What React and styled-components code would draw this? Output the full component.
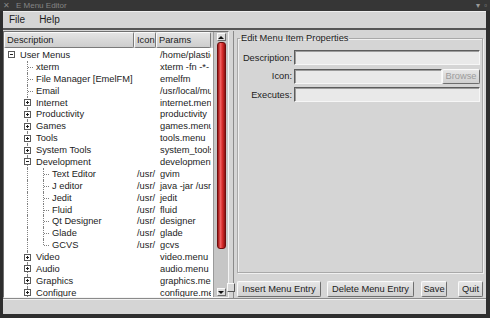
import React from 'react';
import styled, { createGlobalStyle } from 'styled-components';

const GlobalStyle = createGlobalStyle`
  html, body {
    margin: 0;
    padding: 0;
    background: #2e2e2e;
  }
  body {
    font-family: "Liberation Sans", Arial, sans-serif;
    font-size: 9.3px;
    color: #1c1c1c;
  }
  * { box-sizing: border-box; }
`;

const Window = styled.div`
  width: 490px;
  height: 318px;
  display: flex;
  flex-direction: column;
  background: #2e2e2e;
  overflow: hidden;
`;

const TitleBar = styled.div`
  height: 11px;
  display: flex;
  align-items: center;
  padding: 0 3px 0 3px;
  background: #363636;
  color: #858585;
  font-size: 8px;
  line-height: 11px;
`;

const TitleText = styled.span`
  margin-left: 6px;
  flex: 1;
`;

const TitleIcon = styled.span`
  margin-left: 4px;
  color: #9a9a9a;
`;

const Client = styled.div`
  flex: 1;
  min-height: 0;
  margin: 0 4px 4px 3px;
  background: #d5d5d5;
  display: flex;
  flex-direction: column;
`;

const MenuBar = styled.div`
  height: 19px;
  display: flex;
  align-items: center;
  gap: 14px;
  padding-left: 6px;
  border-bottom: 2px solid #555;
  box-shadow: inset 0 1px 0 #eeeeee;
  font-size: 10px;
`;

const Paned = styled.div`
  flex: 1;
  min-height: 0;
  display: flex;
  position: relative;
  padding-top: 1px;
`;

const LeftPane = styled.div`
  width: 226px;
  display: flex;
  border: 1px solid;
  border-color: #707070 #f4f4f4 #f4f4f4 #707070;
`;

const TreeView = styled.div`
  width: 209px;
  display: flex;
  flex-direction: column;
`;

const Header = styled.div`
  height: 16px;
  display: flex;
  background: #d5d5d5;
`;

const HeadButton = styled.div`
  width: ${p => p.$w}px;
  height: 16px;
  flex: none;
  padding-left: 2px;
  line-height: 14px;
  border: 1px solid;
  border-color: #fafafa #7a7a7a #7a7a7a #fafafa;
  border-radius: 2px;
  background: linear-gradient(#e4e4e4, #cdcdcd);
  white-space: nowrap;
  overflow: hidden;
`;

const Rows = styled.div`
  flex: 1;
  background: #ffffff;
  padding-top: 1px;
  overflow: hidden;
`;

const Row = styled.div`
  height: 11.9px;
  display: flex;
  align-items: stretch;
  white-space: nowrap;
`;

const DescCell = styled.div`
  width: 130px;
  flex: none;
  display: flex;
  align-items: stretch;
  overflow: hidden;
`;

const Label = styled.span`
  align-self: center;
`;

const IconCell = styled.div`
  width: 22px;
  flex: none;
  padding-left: 3px;
  overflow: hidden;
  align-self: center;
`;

const ParamsCell = styled.div`
  width: 55px;
  flex: none;
  padding-left: 4px;
  overflow: hidden;
  align-self: center;
`;

const Guide = styled.span`
  width: 16px;
  flex: none;
  position: relative;
  display: flex;
  align-items: center;
  padding-left: 4px;

  &::before {
    content: '';
    display: ${p => (p.$v === 'none' ? 'none' : 'block')};
    position: absolute;
    left: 7px;
    top: 0;
    bottom: ${p => (p.$v === 'top' ? '50%' : '0')};
    border-left: 1px dotted #808080;
  }

  &::after {
    content: '';
    display: ${p => (p.$stub ? 'block' : 'none')};
    position: absolute;
    left: 8px;
    top: 50%;
    width: 5px;
    border-top: 1px dotted #808080;
  }
`;

const Expander = styled.span`
  width: 7px;
  height: 7px;
  position: relative;
  z-index: 1;
  background: #fff;
  border: 1px solid #5a5a5a;

  &::before {
    content: '';
    position: absolute;
    left: 1px;
    right: 1px;
    top: 2px;
    border-top: 1px solid #202020;
  }

  &::after {
    content: '';
    display: ${p => (p.$open ? 'none' : 'block')};
    position: absolute;
    top: 1px;
    bottom: 1px;
    left: 2px;
    border-left: 1px solid #202020;
  }
`;

const Scrollbar = styled.div`
  width: 15px;
  display: flex;
  flex-direction: column;
  align-items: center;
  padding: 1px 0;
  background: #c6c6c6;
  border-left: 1px solid #9a9a9a;
`;

const Arrow = styled.div`
  width: 9px;
  height: 8px;
  flex: none;
  display: flex;
  align-items: center;
  justify-content: center;
  background: #dedede;
  border: 1px solid;
  border-color: #fafafa #6a6a6a #6a6a6a #fafafa;

  &::after {
    content: '';
    border-left: 3px solid transparent;
    border-right: 3px solid transparent;
    ${p => (p.$down ? 'border-top: 3px solid #111;' : 'border-bottom: 3px solid #111;')}
  }
`;

const Track = styled.div`
  flex: 1;
  width: 100%;
  display: flex;
  justify-content: center;
  padding-top: 1px;
`;

const Thumb = styled.div`
  width: 9px;
  height: ${p => p.$h}px;
  border: 1px solid #6e0c0c;
  border-radius: 3px;
  background: linear-gradient(90deg, #9c1616, #f06060 35%, #d42a2a 65%, #8c1212);
`;

const Handle = styled.div`
  position: absolute;
  left: 224px;
  bottom: 6px;
  width: 8px;
  height: 9px;
  background: #d8d8d8;
  border: 1px solid;
  border-color: #fafafa #555 #555 #fafafa;
`;

const RightPane = styled.div`
  flex: 1;
  margin-left: 4px;
  display: flex;
  flex-direction: column;
  padding: 2px 3px 1px 3px;
  border-left: 1px solid #8a8a8a;
`;

const Frame = styled.fieldset`
  flex: 1;
  margin: 0;
  padding: 6px 2px 0 1px;
  border: 1px solid #a9a9a9;
  box-shadow: inset 1px 1px 0 #f0f0f0, 1px 1px 0 #f0f0f0;
  min-width: 0;
`;

const Legend = styled.legend`
  padding: 0 1px;
  margin-left: 1px;
  font-size: 9.3px;
  line-height: 11px;
`;

const Fields = styled.div`
  display: grid;
  grid-template-columns: 53px 1fr;
  column-gap: 2px;
  row-gap: 3.5px;
  align-items: center;
`;

const FieldLabel = styled.span`
  text-align: right;
  white-space: nowrap;
`;

const FieldLine = styled.div`
  display: flex;
  height: 15px;
`;

const TextInput = styled.div`
  flex: 1;
  height: 15px;
  background: #e9e9e9;
  border: 1px solid;
  border-color: #5c5c5c #f6f6f6 #f6f6f6 #5c5c5c;
  box-shadow: inset 1px 1px 0 #9c9c9c;
`;

const Button = styled.div`
  width: ${p => p.$w}px;
  height: ${p => p.$h || 16}px;
  margin-left: ${p => p.$ml || 0}px;
  flex: none;
  display: flex;
  align-items: center;
  justify-content: center;
  white-space: nowrap;
  color: ${p => (p.$disabled ? '#9c9c9c' : '#1c1c1c')};
  background: linear-gradient(#e6e6e6, #d0d0d0);
  border: 1px solid;
  border-color: #fafafa #6e6e6e #6e6e6e #fafafa;
  border-radius: 2px;
`;

const ButtonRow = styled.div`
  height: 16px;
  margin-top: 8px;
  display: flex;
`;

const StatusBar = styled.div`
  height: 16px;
  flex: none;
  border-top: 1px solid #8a8a8a;
  box-shadow: inset 0 1px 0 #f2f2f2;
`;

const rows = [
  { lvl: 0, exp: 'open', desc: 'User Menus', params: '/home/plastic' },
  { lvl: 1, desc: 'xterm', params: 'xterm -fn -*-' },
  { lvl: 1, desc: 'File Manager [EmelFM]', params: 'emelfm' },
  { lvl: 1, desc: 'Email', params: '/usr/local/mutt' },
  { lvl: 1, exp: 'closed', desc: 'Internet', params: 'internet.menu' },
  { lvl: 1, exp: 'closed', desc: 'Productivity', params: 'productivity' },
  { lvl: 1, exp: 'closed', desc: 'Games', params: 'games.menu' },
  { lvl: 1, exp: 'closed', desc: 'Tools', params: 'tools.menu' },
  { lvl: 1, exp: 'closed', desc: 'System Tools', params: 'system_tools' },
  { lvl: 1, exp: 'open', desc: 'Development', params: 'development' },
  { lvl: 2, desc: 'Text Editor', icon: '/usr/', params: 'gvim' },
  { lvl: 2, desc: 'J editor', icon: '/usr/', params: 'java -jar /usr' },
  { lvl: 2, desc: 'Jedit', icon: '/usr/', params: 'jedit' },
  { lvl: 2, desc: 'Fluid', icon: '/usr/', params: 'fluid' },
  { lvl: 2, desc: 'Qt Designer', icon: '/usr/', params: 'designer' },
  { lvl: 2, desc: 'Glade', icon: '/usr/', params: 'glade' },
  { lvl: 2, desc: 'GCVS', icon: '/usr/', params: 'gcvs', last: true },
  { lvl: 1, exp: 'closed', desc: 'Video', params: 'video.menu' },
  { lvl: 1, exp: 'closed', desc: 'Audio', params: 'audio.menu' },
  { lvl: 1, exp: 'closed', desc: 'Graphics', params: 'graphics.menu' },
  { lvl: 1, exp: 'closed', desc: 'Configure', params: 'configure.menu' },
];

const TreeGuides = ({ row }) => {
  const box = row.exp ? <Expander $open={row.exp === 'open'} /> : null;
  if (row.lvl === 0) {
    return <Guide $v="none">{box}</Guide>;
  }
  if (row.lvl === 1) {
    return (
      <>
        <Guide $v="none" />
        <Guide $v="full" $stub={!row.exp}>{box}</Guide>
      </>
    );
  }
  return (
    <>
      <Guide $v="none" />
      <Guide $v="full" />
      <Guide $v={row.last ? 'top' : 'full'} $stub />
    </>
  );
};

const App = () => {
  return (
    <>
      <GlobalStyle />
      <Window>
        <TitleBar>
          <span>✕</span>
          <TitleText>E Menu Editor</TitleText>
          <TitleIcon>▾</TitleIcon>
          <TitleIcon>▫</TitleIcon>
        </TitleBar>
        <Client>
          <MenuBar>
            <span>File</span>
            <span>Help</span>
          </MenuBar>
          <Paned>
            <LeftPane>
              <TreeView>
                <Header>
                  <HeadButton $w={130}>Description</HeadButton>
                  <HeadButton $w={22}>Icon</HeadButton>
                  <HeadButton $w={55}>Params</HeadButton>
                </Header>
                <Rows>
                  {rows.map((row, i) => (
                    <Row key={i}>
                      <DescCell>
                        <TreeGuides row={row} />
                        <Label>{row.desc}</Label>
                      </DescCell>
                      <IconCell>{row.icon}</IconCell>
                      <ParamsCell>{row.params}</ParamsCell>
                    </Row>
                  ))}
                </Rows>
              </TreeView>
              <Scrollbar>
                <Arrow />
                <Track>
                  <Thumb $h={207} />
                </Track>
                <Arrow $down />
              </Scrollbar>
            </LeftPane>
            <Handle />
            <RightPane>
              <Frame>
                <Legend>Edit Menu Item Properties</Legend>
                <Fields>
                  <FieldLabel>Description:</FieldLabel>
                  <FieldLine>
                    <TextInput />
                  </FieldLine>
                  <FieldLabel>Icon:</FieldLabel>
                  <FieldLine>
                    <TextInput />
                    <Button $w={38} $h={15} $disabled>Browse</Button>
                  </FieldLine>
                  <FieldLabel>Executes:</FieldLabel>
                  <FieldLine>
                    <TextInput />
                  </FieldLine>
                </Fields>
              </Frame>
              <ButtonRow>
                <Button $w={84}>Insert Menu Entry</Button>
                <Button $w={87} $ml={6}>Delete Menu Entry</Button>
                <Button $w={26} $ml={7}>Save</Button>
                <Button $w={25} $ml={11}>Quit</Button>
              </ButtonRow>
            </RightPane>
          </Paned>
          <StatusBar />
        </Client>
      </Window>
    </>
  );
};

export default App;
